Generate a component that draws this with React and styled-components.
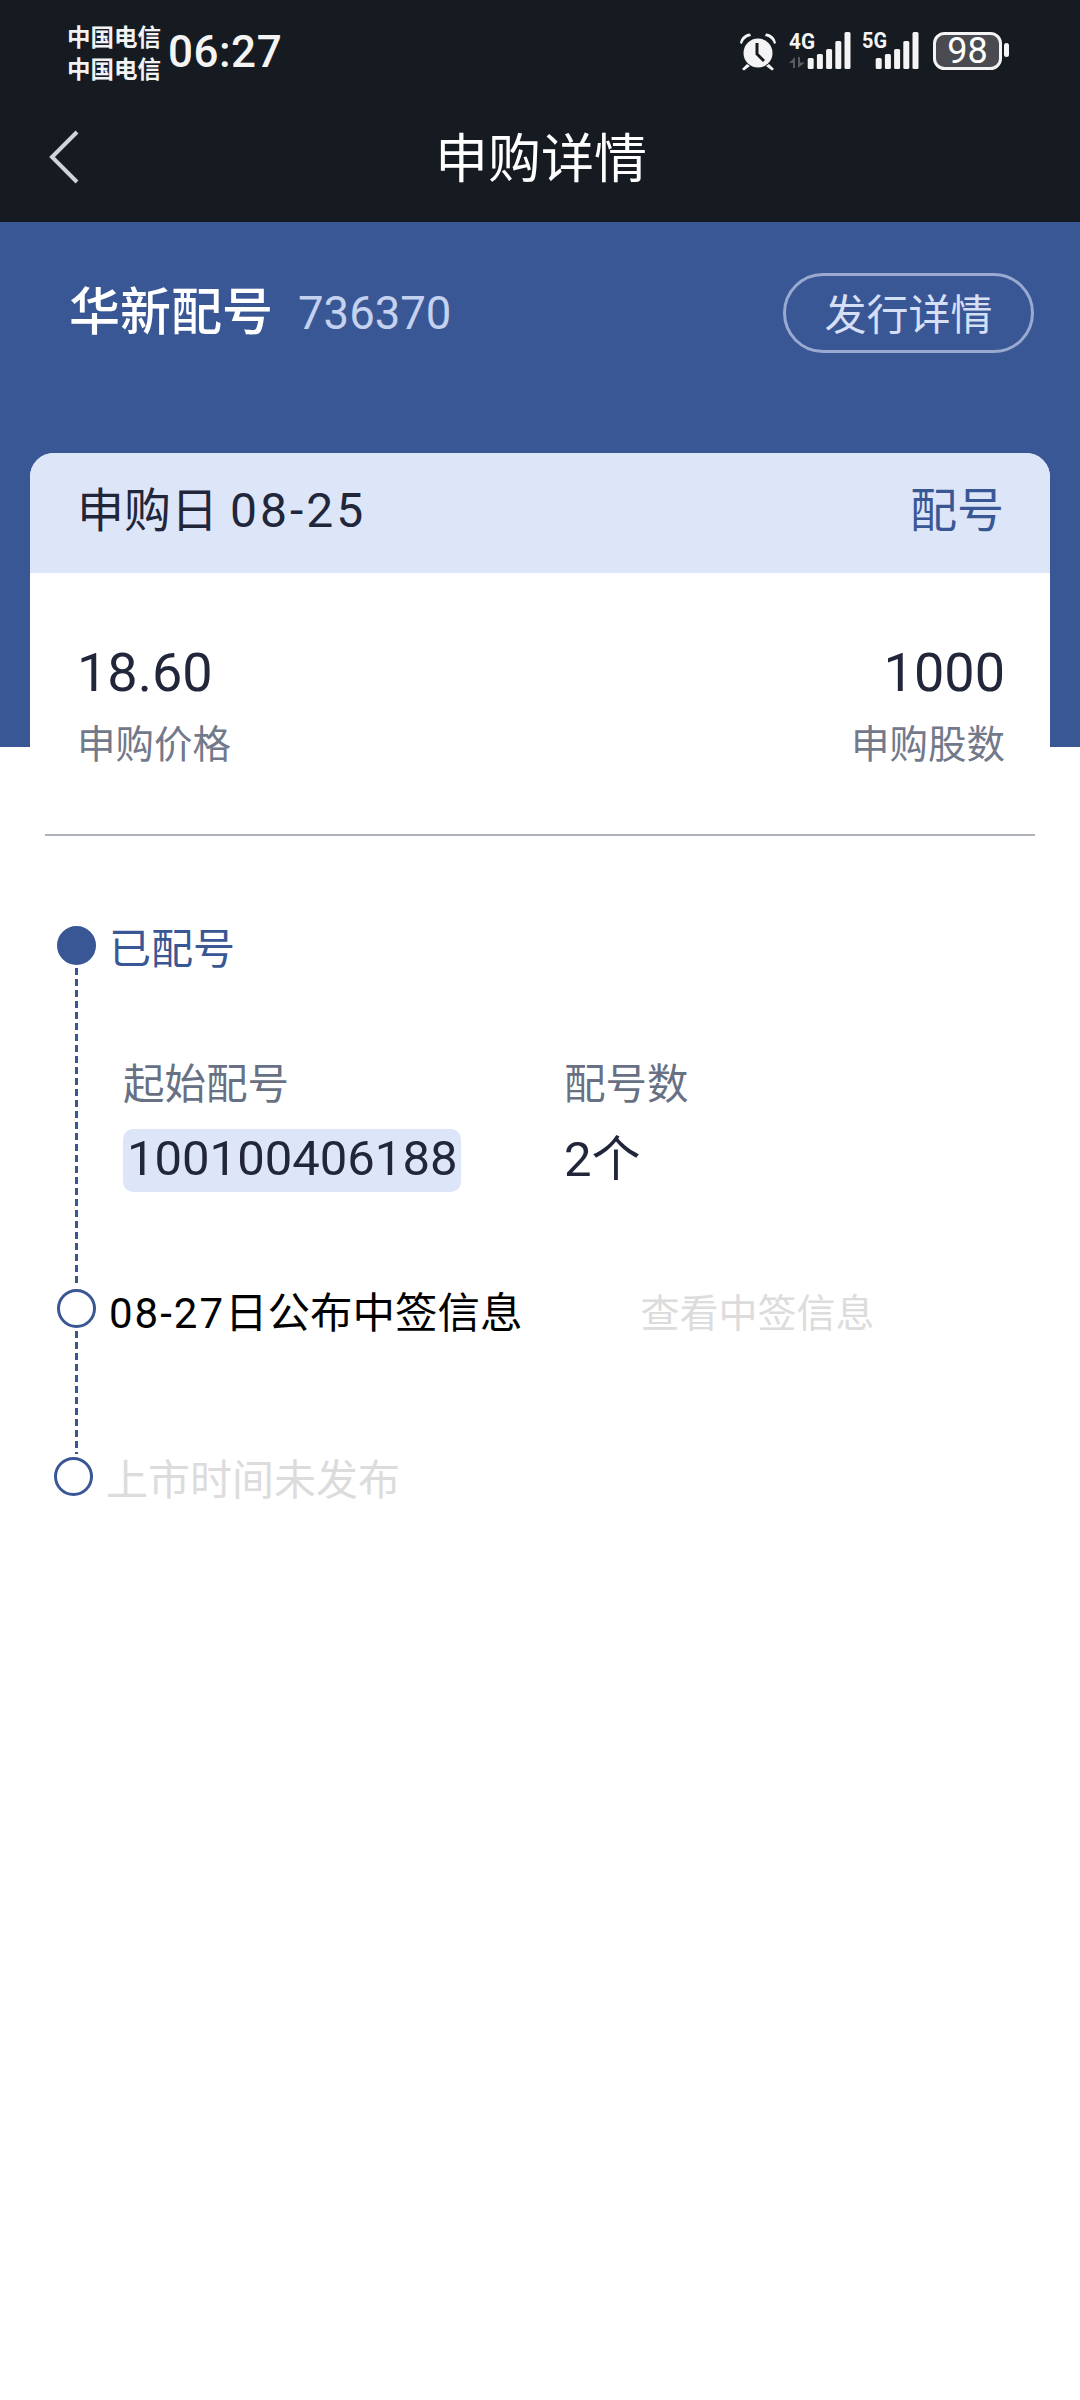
import React from 'react';
import styled, { createGlobalStyle } from 'styled-components';

const GlobalStyle = createGlobalStyle`
  html, body {
    margin: 0;
    padding: 0;
    background: #fff;
  }
  * { box-sizing: border-box; }
`;

const Page = styled.div`
  width: 1080px;
  min-height: 2400px;
  background: #fff;
  font-family: Roboto, "Noto Sans CJK SC", sans-serif;
  overflow: hidden;
`;

// Dark top area
const TopBar = styled.header`
  height: 222px;
  background: #161a21;
  color: #fff;
`;

const StatusBar = styled.div`
  height: 100px;
  padding: 22px 68px 0 67px;
  display: flex;
  align-items: flex-start;
  justify-content: space-between;
`;

const StatusLeft = styled.div`
  display: flex;
  align-items: center;
  gap: 7px;
`;

const Carriers = styled.div`
  display: flex;
  flex-direction: column;
  font-size: 23.5px;
  line-height: 32px;
  font-weight: 700;
  color: #f2f2f2;
`;

const Clock = styled.div`
  margin-top: -4px;
  font-size: 44px;
  line-height: 60px;
  font-weight: 500;
  letter-spacing: 0.5px;
  color: #f4f4f4;
`;

const NavBar = styled.div`
  height: 122px;
  position: relative;
  display: flex;
  align-items: center;
  justify-content: center;
`;

const BackButton = styled.button`
  position: absolute;
  left: 45px;
  top: 26px;
  width: 36px;
  height: 60px;
  padding: 0;
  border: none;
  background: none;
`;

const NavTitle = styled.h1`
  margin: -2px 0 0 2px;
  font-size: 53px;
  line-height: 70px;
  font-weight: 400;
`;

// Blue band
const Hero = styled.section`
  height: 525px;
  background: #3a5795;
  padding: 51px 46px 0 69px;
  display: flex;
  align-items: flex-start;
  justify-content: space-between;
`;

const StockName = styled.div`
  display: flex;
  align-items: center;
  gap: 25px;
  height: 80px;
`;

const Name = styled.span`
  font-size: 51px;
  line-height: 70px;
  font-weight: 500;
  color: #fff;
`;

const Code = styled.span`
  font-size: 45.5px;
  line-height: 60px;
  color: #c4d2ef;
  margin-top: 2px;
`;

const OutlineButton = styled.button`
  width: 251px;
  height: 80px;
  border: 3px solid #99a9d0;
  border-radius: 40px;
  background: none;
  padding: 0 0 4px;
  font-family: inherit;
  font-size: 42px;
  color: #d5dff5;
`;

const Card = styled.section`
  position: relative;
  margin: -294px 30px 0;
  background: #fff;
  border-radius: 24px 24px 0 0;
  overflow: hidden;
`;

const CardHead = styled.div`
  height: 120px;
  background: #dde6f8;
  padding: 0 46px 5px 47px;
  display: flex;
  align-items: center;
  justify-content: space-between;
  font-size: 47px;
  line-height: 60px;
  color: #22263a;
`;

const DateText = styled.span`
  margin-left: 12px;
  font-size: 48px;
  letter-spacing: 3px;
`;

const Tag = styled.span`
  color: #3a5795;
`;

const CardBody = styled.div`
  padding: 70px 45px 0 47px;
  display: flex;
  justify-content: space-between;
`;

const Stat = styled.div`
  display: flex;
  flex-direction: column;
  align-items: ${(p) => (p.$right ? 'flex-end' : 'flex-start')};
`;

const StatValue = styled.div`
  font-size: 54px;
  line-height: 60px;
  color: #22263a;
`;

const StatLabel = styled.div`
  margin-top: 17px;
  font-size: 38.5px;
  line-height: 50px;
  color: #72798a;
`;

const Divider = styled.hr`
  margin: 64px 45px 0;
  border: none;
  height: 2px;
  background: #aeb2ba;
`;

// Timeline
const Timeline = styled.div`
  margin: 90px 0 0 57px;
  display: flex;
  flex-direction: column;
`;

const Step = styled.div`
  display: flex;
  height: ${(p) => p.$height}px;
  margin-left: ${(p) => p.$shift || 0}px;
`;

const Rail = styled.div`
  width: 39px;
  display: flex;
  flex-direction: column;
  align-items: center;
  flex-shrink: 0;
`;

const Dot = styled.span`
  width: 39px;
  height: 39px;
  border-radius: 50%;
  border: 3px solid #3a5795;
  background: ${(p) => (p.$filled ? '#3a5795' : '#fff')};
  flex-shrink: 0;
`;

const Connector = styled.span`
  flex: 1;
  width: 3px;
  margin: 3px 0;
  background: repeating-linear-gradient(to bottom, #3a5795 0 7px, transparent 7px 11px);
`;

const StepMain = styled.div`
  margin-left: ${(p) => p.$gap}px;
  flex: 1;
`;

const StepRow = styled.div`
  display: flex;
  align-items: center;
  height: 44px;
  margin-top: ${(p) => p.$top ?? 2}px;
`;

const StepTitle = styled.span`
  font-size: ${(p) => p.$size}px;
  line-height: 44px;
  color: ${(p) => p.$color};
  white-space: nowrap;
`;

const StepDate = styled.span`
  font-size: 42px;
  letter-spacing: 2px;
`;

const StepAction = styled.span`
  margin-left: 118px;
  font-size: 39px;
  line-height: 44px;
  color: #dcdcdc;
`;

const Details = styled.div`
  margin: 88px 0 0 14px;
  display: grid;
  grid-template-columns: 441px auto;
`;

const DetailLabel = styled.div`
  font-size: 41.5px;
  line-height: 50px;
  color: #687083;
`;

const DetailValue = styled.div`
  margin-top: 19px;
  height: 63px;
  display: flex;
  align-items: center;
  font-size: 49px;
  line-height: 60px;
  color: #22263a;
`;

const PlainValue = styled.span`
  margin-top: -1px;
`;

const Chip = styled.span`
  height: 63px;
  padding: 0 4px 3px 4px;
  display: inline-flex;
  align-items: center;
  background: #dde6f8;
  border-radius: 10px;
`;

const IconRow = styled.div`
  display: flex;
  align-items: center;
  margin-top: -4px;
`;

const bars = (x0, heights) =>
  heights.map((h, i) => (
    <rect key={i} x={x0 + i * 9.2} y={37 - h} width="6" height={h} rx="1.5" fill="#f4f4f4" />
  ));

function StatusIcons() {
  return (
    <IconRow>
      <svg width="273" height="54" viewBox="0 -14 273 54">
        {/* alarm clock */}
        <g fill="#f4f4f4">
          <circle cx="19" cy="21" r="14.5" />
          <path d="M1 11 C2 5 6 2 11 1.5 L12 4 C7 5 4 8 3 12 Z" />
          <path d="M37 11 C36 5 32 2 27 1.5 L26 4 C31 5 34 8 35 12 Z" />
          <path d="M8 32 L3 37 L5 38.5 L11 34 Z" />
          <path d="M30 32 L35 37 L33 38.5 L27 34 Z" />
        </g>
        <path d="M18 11 V22 L25 29" fill="none" stroke="#161a21" strokeWidth="3" />
        {/* 4G + signal */}
        <text x="50" y="17" fontSize="22.5" fontWeight="700" fill="#f4f4f4" textLength="26" lengthAdjust="spacingAndGlyphs" fontFamily="Roboto, sans-serif">4G</text>
        <path d="M50 31 L56 25 V36 H54 V31 Z M59 25 H61 V30.5 H66 L59 36 Z" fill="#5a5b60" />
        {bars(68.7, [11, 15, 20, 28, 37])}
        {/* 5G + signal */}
        <text x="123" y="16" fontSize="22.5" fontWeight="700" fill="#f4f4f4" textLength="25" lengthAdjust="spacingAndGlyphs" fontFamily="Roboto, sans-serif">5G</text>
        {bars(136.7, [11, 15, 20, 28, 37])}
        {/* battery */}
        <rect x="195.5" y="1.5" width="66" height="35" rx="10" fill="#4a4b50" stroke="#f4f4f4" strokeWidth="3" />
        <text x="228.5" y="31" fontSize="36" textAnchor="middle" fill="#fff" fontFamily="Roboto, sans-serif">98</text>
        <rect x="265" y="11" width="5" height="14" rx="2.5" fill="#f4f4f4" />
      </svg>
    </IconRow>
  );
}

export default function App() {
  return (
    <Page>
      <GlobalStyle />
      <TopBar>
        <StatusBar>
          <StatusLeft>
            <Carriers>
              <span>中国电信</span>
              <span>中国电信</span>
            </Carriers>
            <Clock>06:27</Clock>
          </StatusLeft>
          <StatusIcons />
        </StatusBar>
        <NavBar>
          <BackButton aria-label="返回">
            <svg width="36" height="60" viewBox="0 0 36 60">
              <path d="M32 6 L7 31 L32 56" fill="none" stroke="#d0d3d8" strokeWidth="4" />
            </svg>
          </BackButton>
          <NavTitle>申购详情</NavTitle>
        </NavBar>
      </TopBar>

      <Hero>
        <StockName>
          <Name>华新配号</Name>
          <Code>736370</Code>
        </StockName>
        <OutlineButton>发行详情</OutlineButton>
      </Hero>

      <Card>
        <CardHead>
          <span>
            申购日<DateText>08-25</DateText>
          </span>
          <Tag>配号</Tag>
        </CardHead>
        <CardBody>
          <Stat>
            <StatValue>18.60</StatValue>
            <StatLabel>申购价格</StatLabel>
          </Stat>
          <Stat $right>
            <StatValue>1000</StatValue>
            <StatLabel>申购股数</StatLabel>
          </Stat>
        </CardBody>
      </Card>

      <Divider />

      <Timeline>
        <Step $height={363}>
          <Rail>
            <Dot $filled />
            <Connector />
          </Rail>
          <StepMain $gap={13}>
            <StepRow>
              <StepTitle $size={42} $color="#3a5795">已配号</StepTitle>
            </StepRow>
            <Details>
              <div>
                <DetailLabel>起始配号</DetailLabel>
                <DetailValue>
                  <Chip>100100406188</Chip>
                </DetailValue>
              </div>
              <div>
                <DetailLabel>配号数</DetailLabel>
                <DetailValue>
                  <PlainValue>2个</PlainValue>
                </DetailValue>
              </div>
            </Details>
          </StepMain>
        </Step>
        <Step $height={168}>
          <Rail>
            <Dot />
            <Connector />
          </Rail>
          <StepMain $gap={13}>
            <StepRow $top={3}>
              <StepTitle $size={42.5} $color="#000">
                <StepDate>08-27</StepDate>日公布中签信息
              </StepTitle>
              <StepAction>查看中签信息</StepAction>
            </StepRow>
          </StepMain>
        </Step>
        <Step $height={60} $shift={-3}>
          <Rail>
            <Dot />
          </Rail>
          <StepMain $gap={13}>
            <StepRow>
              <StepTitle $size={42} $color="#dcdcdc">上市时间未发布</StepTitle>
            </StepRow>
          </StepMain>
        </Step>
      </Timeline>
    </Page>
  );
}
